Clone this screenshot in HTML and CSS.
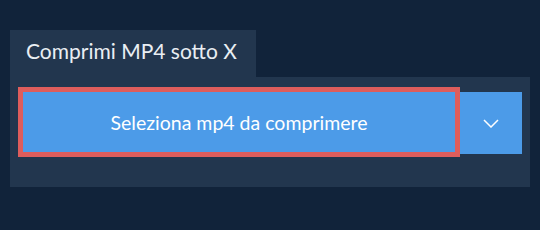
FILE: index.html
```html
<!DOCTYPE html>
<html lang="it">
<head>
    <meta charset="UTF-8">
    <meta name="viewport" content="width=device-width, initial-scale=1.0">
    <title>Comprimi MP4 sotto X</title>
    <link rel="stylesheet" href="styles.css">
</head>
<body>
    <div class="compress-box">
        <div class="tab">Comprimi MP4 sotto X</div>
        <div class="panel">
            <div class="upload-group">
                <button class="select-button">Seleziona mp4 da comprimere</button>
                <button class="dropdown-button" aria-label="Altre opzioni">
                    <svg width="16" height="9" viewBox="0 0 16 9">
                        <polyline points="1,1 8,8 15,1" fill="none" stroke="#ffffff" stroke-width="1.5"/>
                    </svg>
                </button>
            </div>
        </div>
    </div>
</body>
</html>
```

FILE: styles.css
```css
body {
    margin: 0;
    font-family: Lato, "Open Sans", sans-serif;
    background-color: #11233a;
    color: #e9eef3;
}

.compress-box {
    padding: 30px 10px 0 10px;
    width: 520px;
}

.tab {
    display: inline-block;
    width: 246px;
    height: 47px;
    box-sizing: border-box;
    padding: 8px 0 0 16px;
    font-size: 21px;
    background-color: #22364e;
    color: #e9eef3;
}

.panel {
    height: 110px;
    box-sizing: border-box;
    padding: 10px 8px;
    background-color: #22364e;
}

.upload-group {
    display: flex;
    align-items: flex-start;
}

button {
    font-family: Lato, "Open Sans", sans-serif;
    color: white;
    background-color: #4c9be8;
    border: none;
    cursor: pointer;
    padding: 0;
}

.select-button {
    width: 442px;
    height: 70px;
    border: 5px solid #de5d5c;
    font-size: 19.5px;
}

.dropdown-button {
    width: 62px;
    height: 62px;
    margin-top: 5px;
    display: flex;
    align-items: center;
    justify-content: center;
}
```
